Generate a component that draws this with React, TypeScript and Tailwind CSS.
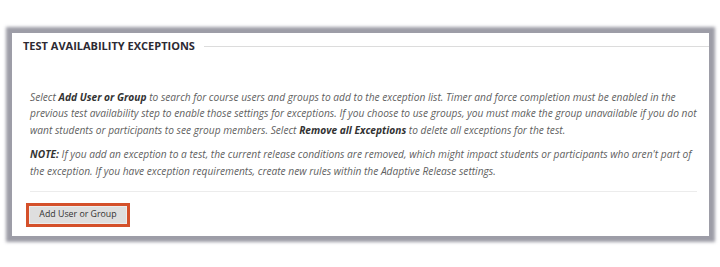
export default function App() {
	return (
		<div className="h-[267px] w-[720px] bg-white pl-[12px] pt-[33px] font-['Open_Sans',sans-serif]">
			<section className="flex h-[203px] w-[697px] flex-col bg-white pl-[11px] pr-[12px] shadow-[0_0_3px_6px_rgba(140,140,152,0.85)]">
				<div className="mt-[5px] -mr-[12px] flex items-center gap-[9px]">
					<h2 className="text-[11px] font-bold uppercase text-[#2d2a33]">
						Test Availability Exceptions
					</h2>
					<div className="h-px flex-1 bg-[#dcdcdc]" />
				</div>
				<div className="mt-[34px] whitespace-nowrap pl-[7px] text-[10.2px] italic leading-[16.5px] text-[#5f5f5f]">
					<p>
						Select <b className="text-[#333]">Add User or Group</b> to search for course users and groups to add to the exception list. Timer and force completion must be enabled in the
						<br />
						previous test availability step to enable those settings for exceptions. If you choose to use groups, you must make the group unavailable if you do not
						<br />
						want students or participants to see group members. Select <b className="text-[#333]">Remove all Exceptions</b> to delete all exceptions for the test.
					</p>
					<p className="mt-[8px]">
						<b className="text-[#333]">NOTE:</b> If you add an exception to a test, the current release conditions are removed, which might impact students or participants who aren't part of
						<br />
						the exception. If you have exception requirements, create new rules within the Adaptive Release settings.
					</p>
					<div className="mt-[12px] h-px bg-[#ececec]" />
				</div>
				<div className="mt-[11px] pl-[3px]">
					<button
						type="button"
						className="flex h-[24px] w-[104px] items-center justify-center border-[3px] border-[#d4502a] bg-[#dedede] text-[8.8px] text-[#333] shadow-[inset_0_0_0_1px_#ececec]"
					>
						Add User or Group
					</button>
				</div>
			</section>
		</div>
	);
}
